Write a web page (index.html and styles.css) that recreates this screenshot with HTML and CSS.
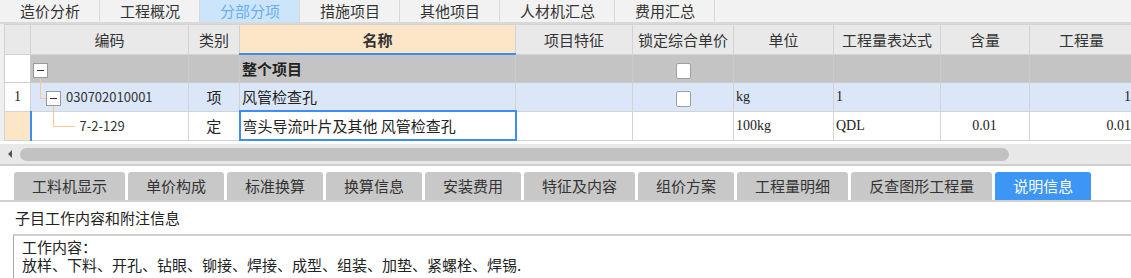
FILE: index.html
```html
<!DOCTYPE html>
<html lang="zh-CN">
<head>
  <meta charset="utf-8">
  <title>分部分项</title>
  <link rel="stylesheet" href="styles.css">
</head>
<body>
  <div class="top-tabs">
    <div class="top-tab">造价分析</div>
    <div class="top-tab">工程概况</div>
    <div class="top-tab active">分部分项</div>
    <div class="top-tab">措施项目</div>
    <div class="top-tab">其他项目</div>
    <div class="top-tab">人材机汇总</div>
    <div class="top-tab">费用汇总</div>
  </div>

  <div class="grid">
    <table>
      <colgroup>
        <col style="width:26px">
        <col style="width:158px">
        <col style="width:51px">
        <col style="width:276px">
        <col style="width:117px">
        <col style="width:101px">
        <col style="width:100px">
        <col style="width:107px">
        <col style="width:89px">
        <col style="width:104px">
      </colgroup>
      <tr class="head">
        <th></th>
        <th>编码</th>
        <th>类别</th>
        <th class="sorted">名称</th>
        <th>项目特征</th>
        <th>锁定综合单价</th>
        <th>单位</th>
        <th>工程量表达式</th>
        <th>含量</th>
        <th>工程量</th>
      </tr>
      <tr class="row-all">
        <td class="num"></td>
        <td class="code lvl0"><span class="tree-box first"></span></td>
        <td></td>
        <td class="name"><b>整个项目</b></td>
        <td></td>
        <td class="check"><span class="checkbox"></span></td>
        <td></td>
        <td></td>
        <td></td>
        <td></td>
      </tr>
      <tr class="row-item">
        <td class="num">1</td>
        <td class="code lvl1"><span class="tree-box second"></span>030702010001</td>
        <td class="type">项</td>
        <td class="name">风管检查孔</td>
        <td></td>
        <td class="check"><span class="checkbox"></span></td>
        <td class="serif">kg</td>
        <td class="serif">1</td>
        <td></td>
        <td class="serif right">1</td>
      </tr>
      <tr class="row-quota">
        <td class="num"></td>
        <td class="code lvl2 current">7-2-129</td>
        <td class="type">定</td>
        <td class="name editing">弯头导流叶片及其他 风管检查孔</td>
        <td></td>
        <td></td>
        <td class="serif">100kg</td>
        <td class="serif">QDL</td>
        <td class="serif center">0.01</td>
        <td class="serif right">0.01</td>
      </tr>
    </table>
  </div>

  <div class="hscroll">
    <span class="arrow"></span>
    <div class="thumb"></div>
  </div>

  <div class="sub-tabs">
    <div class="sub-tab">工料机显示</div>
    <div class="sub-tab">单价构成</div>
    <div class="sub-tab">标准换算</div>
    <div class="sub-tab">换算信息</div>
    <div class="sub-tab">安装费用</div>
    <div class="sub-tab">特征及内容</div>
    <div class="sub-tab">组价方案</div>
    <div class="sub-tab">工程量明细</div>
    <div class="sub-tab">反查图形工程量</div>
    <div class="sub-tab active">说明信息</div>
  </div>

  <div class="note">
    <div class="note-title">子目工作内容和附注信息</div>
    <div class="note-box">
      <div class="note-line">工作内容：</div>
      <div class="note-line">放样、下料、开孔、钻眼、铆接、焊接、成型、组装、加垫、紧螺栓、焊锡.</div>
    </div>
  </div>
</body>
</html>
```

FILE: styles.css
```css
html, body {
  margin: 0;
  padding: 0;
}
body {
  width: 1131px;
  height: 278px;
  overflow: hidden;
  background: #fff;
  color: #333;
  font-family: "Noto Sans CJK SC", "Noto Sans", sans-serif;
}

/* top tabs */
.top-tabs {
  display: flex;
  height: 22px;
  background: #f2f2f2;
  border-bottom: 2px solid #d9d9d9;
}
.top-tab {
  padding: 0 19px 0 20px;
  border-right: 1px solid #d9d9d9;
  font-size: 15px;
  line-height: 21px;
  color: #333;
}
.top-tab.active {
  background: #cde5fa;
  color: #6aaef0;
}

/* grid */
.grid {
  padding-left: 4px;
  background: #efefef;
}
.grid table {
  border-collapse: collapse;
  table-layout: fixed;
  width: 1129px;
  background: #fff;
}
.grid th,
.grid td {
  border: 1px solid #d3d3d3;
  padding: 0 3px;
  white-space: nowrap;
  font-size: 15px;
  font-weight: normal;
  color: #222;
}
.grid th {
  height: 28px;
  background: #e9e9e9;
  text-align: center;
  color: #333;
}
.grid th.sorted {
  background: #fde5c8;
  font-weight: bold;
  border-bottom: 2px solid #3b8ef0;
}
.row-all td {
  height: 27px;
  background: #c4c4c4;
  border-color: #cbcbcb;
}
.row-item td {
  height: 27px;
  background: #dbe7f9;
}
.row-quota td {
  height: 27px;
  background: #fff;
}
.grid td.num {
  background: #fff;
  text-align: center;
  font-family: "Liberation Serif", serif;
  font-size: 14px;
}
.grid .row-quota td.num {
  background: #fde5c8;
}
.grid td.type {
  text-align: center;
}
.grid td.name {
  padding-left: 2px;
}
.grid td.name b {
  font-weight: bold;
}
.grid td.editing {
  border: 2px solid #3c8ff0;
}
.grid td.current {
  border-left: 2px solid #3c8ff0;
}
.grid td.serif {
  font-family: "Liberation Serif", serif;
  font-size: 14px;
  padding-left: 2px;
}
.grid td.right {
  text-align: right;
  padding-right: 2px;
}
.grid td.center {
  text-align: center;
}
.grid td.check {
  text-align: center;
}
.checkbox {
  display: inline-block;
  width: 13px;
  height: 14px;
  border: 1px solid #a0a0a0;
  border-radius: 2px;
  background: #fff;
  vertical-align: middle;
}

/* tree column */
.grid td.code {
  font-size: 13px;
  color: #333;
}
.grid td.lvl0 {
  padding-left: 2px;
}
.grid td.lvl1 {
  padding-left: 15px;
}
.grid td.lvl2 {
  padding-left: 48px;
}
.tree-box {
  position: relative;
  display: inline-block;
  width: 13px;
  height: 13px;
  margin-right: 5px;
  border: 1px solid #9a9a9a;
  background: #fff;
  vertical-align: middle;
}
.tree-box::before {
  content: "";
  position: absolute;
  left: 3px;
  top: 6px;
  width: 7px;
  height: 1px;
  background: #333;
}
.tree-box::after {
  content: "";
  position: absolute;
  left: 6px;
  top: 14px;
  border-left: 1px solid #f7c993;
  border-bottom: 1px solid #f7c993;
}
.tree-box.first::after {
  width: 5px;
  height: 20px;
}
.tree-box.second::after {
  width: 21px;
  height: 20px;
}

/* horizontal scrollbar */
.hscroll {
  display: flex;
  align-items: center;
  height: 20px;
  margin-top: 3px;
  background: #e8e8e8;
  border-bottom: 2px solid #cfcfcf;
}
.arrow {
  width: 0;
  height: 0;
  margin-left: 8px;
  border-top: 4px solid transparent;
  border-bottom: 4px solid transparent;
  border-right: 4px solid #555;
}
.thumb {
  width: 989px;
  height: 13px;
  margin-left: 8px;
  border-radius: 7px;
  background: #c2c2c2;
}

/* bottom tabs */
.sub-tabs {
  display: flex;
  gap: 3px;
  margin-top: 6px;
  padding-left: 14px;
  border-bottom: 2px solid #d2d2d2;
}
.sub-tab {
  padding: 0 18px;
  height: 28px;
  line-height: 28px;
  font-size: 15px;
  color: #333;
  background: #c8c8c8;
  border-radius: 3px 3px 0 0;
}
.sub-tab.active {
  background: #3d95f5;
  color: #fff;
}

/* note panel */
.note {
  padding-left: 13px;
}
.note-title {
  height: 32px;
  line-height: 32px;
  font-size: 15px;
  color: #222;
  padding-left: 2px;
}
.note-box {
  height: 60px;
  padding: 2px 0 0 8px;
  border-left: 1px solid #a8a8a8;
  border-top: 2px solid #d0d0d0;
  font-size: 15px;
  color: #222;
}
.note-line {
  height: 18px;
  line-height: 18px;
}
```
